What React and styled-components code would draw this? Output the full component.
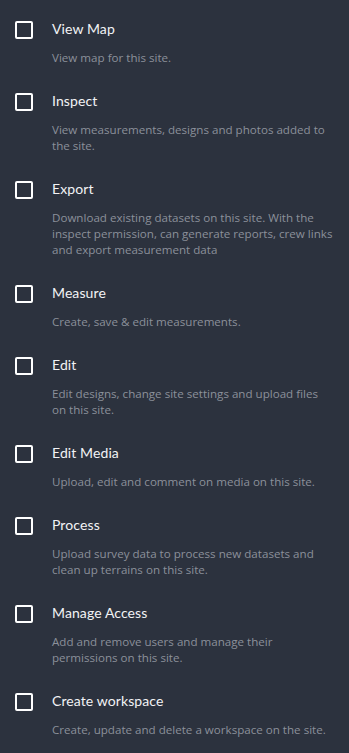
import React from "react";
import styled, { createGlobalStyle } from "styled-components";

const GlobalStyle = createGlobalStyle`
  body {
    margin: 0;
    background: #2c323e;
    font-family: "Open Sans", "Noto Sans", sans-serif;
  }
`;

const List = styled.ul`
  list-style: none;
  margin: 0;
  padding: 21px 15px 0 15px;
  background: #2c323e;
  min-height: 753px;
  box-sizing: border-box;
`;

const Item = styled.li`
  padding-bottom: 27px;
`;

const Row = styled.label`
  display: flex;
  align-items: center;
  gap: 19px;
  height: 18px;
  cursor: pointer;
`;

const Box = styled.span`
  width: 18px;
  height: 18px;
  box-sizing: border-box;
  border: 2px solid #ffffff;
  border-radius: 2px;
  flex-shrink: 0;
`;

const Title = styled.span`
  color: #f2f3f5;
  font-family: "Lato", sans-serif;
  font-size: 14px;
  line-height: 18px;
  padding-bottom: 2px;
  letter-spacing: 0.1px;
`;

const Description = styled.p`
  margin: 11px 0 0 37px;
  color: #8b909a;
  font-size: 11.6px;
  line-height: 16px;
`;

const permissions = [
  { title: "View Map", text: "View map for this site." },
  {
    title: "Inspect",
    text: "View measurements, designs and photos added to the site.",
  },
  {
    title: "Export",
    text: "Download existing datasets on this site. With the inspect permission, can generate reports, crew links and export measurement data",
  },
  { title: "Measure", text: "Create, save & edit measurements." },
  {
    title: "Edit",
    text: "Edit designs, change site settings and upload files on this site.",
  },
  { title: "Edit Media", text: "Upload, edit and comment on media on this site." },
  {
    title: "Process",
    text: "Upload survey data to process new datasets and clean up terrains on this site.",
  },
  {
    title: "Manage Access",
    text: "Add and remove users and manage their permissions on this site.",
  },
  {
    title: "Create workspace",
    text: "Create, update and delete a workspace on the site.",
  },
];

export default function App() {
  return (
    <>
      <GlobalStyle />
      <List>
        {permissions.map((p) => (
          <Item key={p.title}>
            <Row>
              <Box />
              <Title>{p.title}</Title>
            </Row>
            <Description>{p.text}</Description>
          </Item>
        ))}
      </List>
    </>
  );
}
